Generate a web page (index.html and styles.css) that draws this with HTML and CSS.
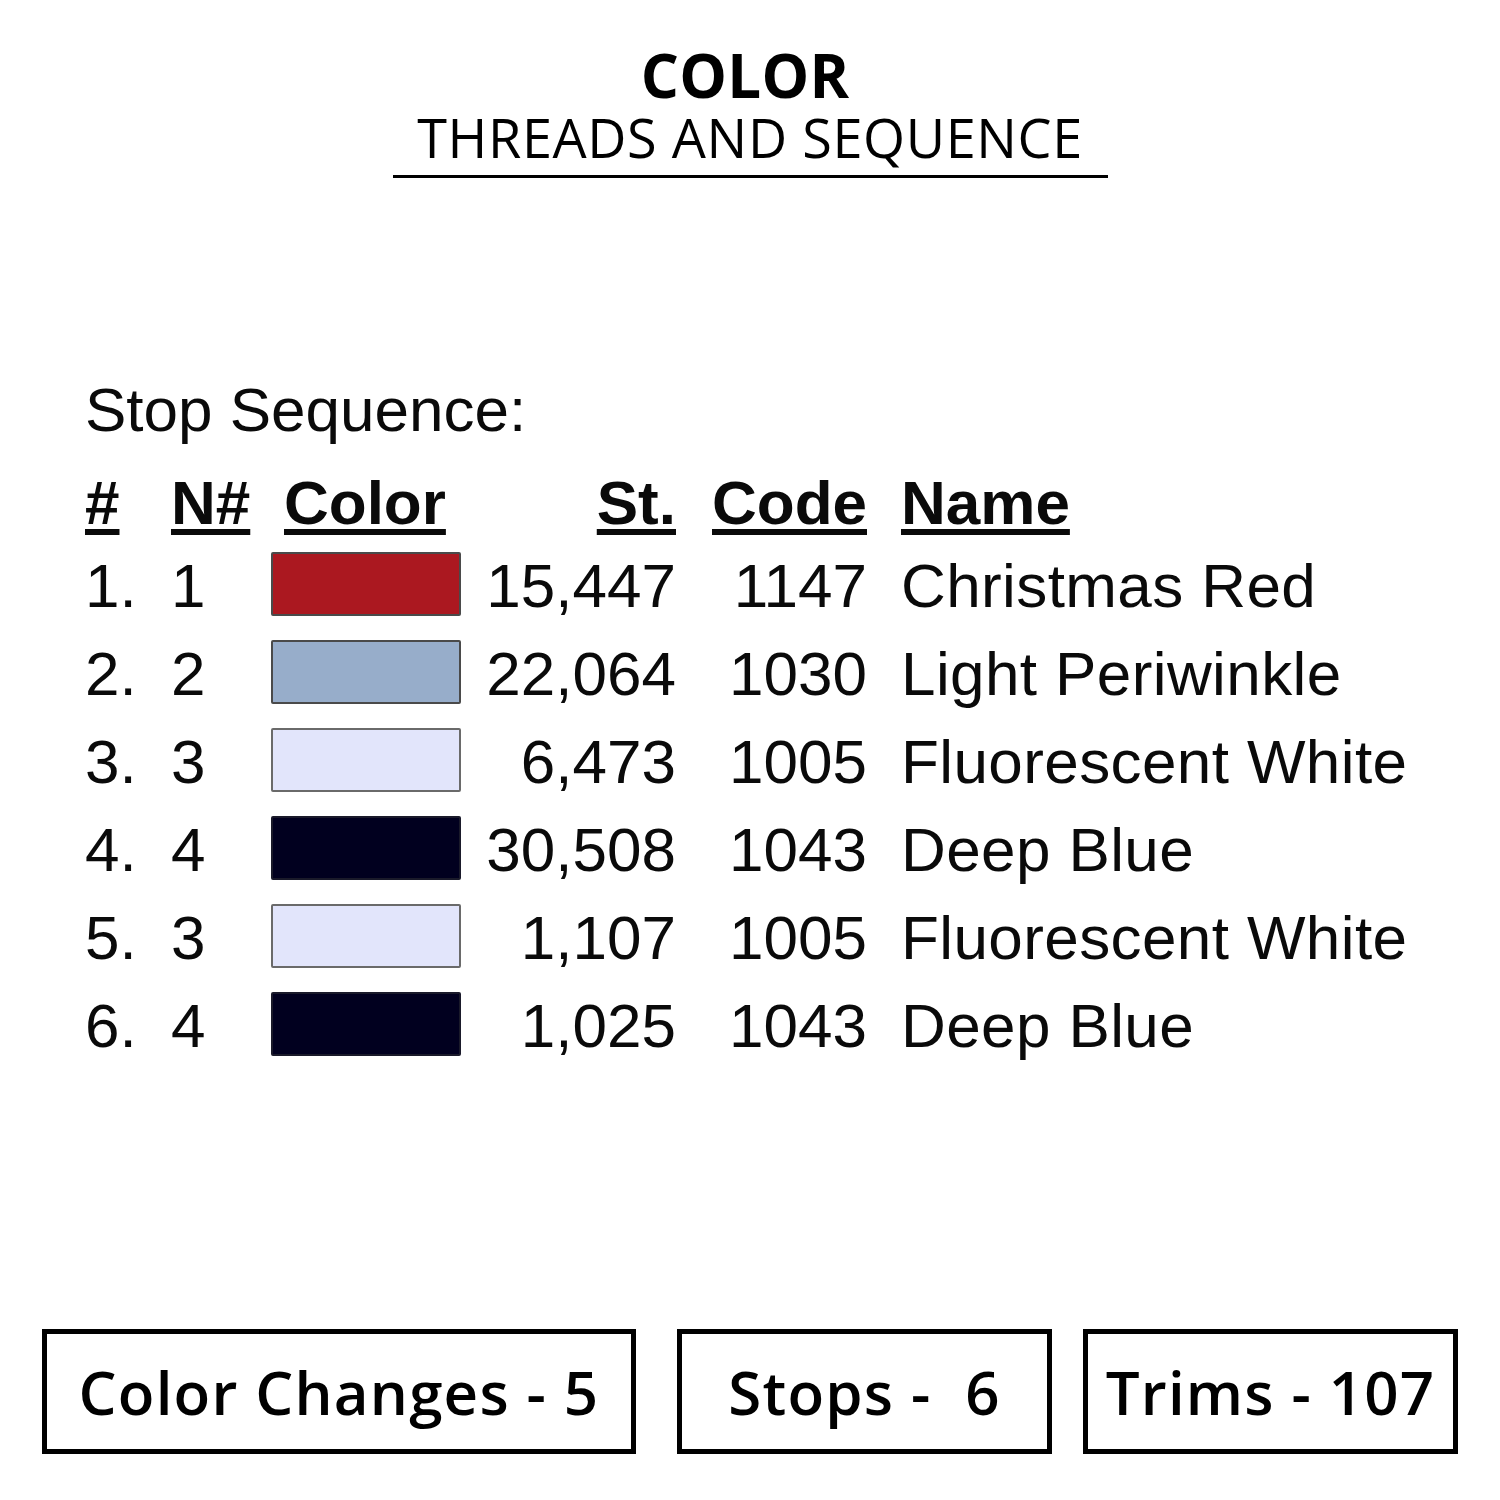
FILE: index.html
```html
<!DOCTYPE html>
<html lang="en">
<head>
<meta charset="utf-8">
<title>Color - Threads and Sequence</title>
<link rel="stylesheet" href="styles.css">
</head>
<body>
<div class="page">
  <header class="title-block">
    <div class="title">COLOR</div>
    <div class="subtitle">THREADS AND SEQUENCE</div>
  </header>

  <section class="sequence">
    <div class="seq-heading">Stop Sequence:</div>
    <div class="seq-table">
      <div class="th c-idx"><span class="u">#</span></div>
      <div class="th c-n"><span class="u">N#</span></div>
      <div class="th c-color"><span class="u">Color</span></div>
      <div class="th c-st"><span class="u">St.</span></div>
      <div class="th c-code"><span class="u">Code</span></div>
      <div class="th c-name"><span class="u">Name</span></div>

      <div class="td c-idx">1.</div>
      <div class="td c-n">1</div>
      <div class="td c-color"><span class="swatch sw-red"></span></div>
      <div class="td c-st">15,447</div>
      <div class="td c-code">1147</div>
      <div class="td c-name">Christmas Red</div>

      <div class="td c-idx">2.</div>
      <div class="td c-n">2</div>
      <div class="td c-color"><span class="swatch sw-peri"></span></div>
      <div class="td c-st">22,064</div>
      <div class="td c-code">1030</div>
      <div class="td c-name">Light Periwinkle</div>

      <div class="td c-idx">3.</div>
      <div class="td c-n">3</div>
      <div class="td c-color"><span class="swatch sw-white"></span></div>
      <div class="td c-st">6,473</div>
      <div class="td c-code">1005</div>
      <div class="td c-name">Fluorescent White</div>

      <div class="td c-idx">4.</div>
      <div class="td c-n">4</div>
      <div class="td c-color"><span class="swatch sw-blue"></span></div>
      <div class="td c-st">30,508</div>
      <div class="td c-code">1043</div>
      <div class="td c-name">Deep Blue</div>

      <div class="td c-idx">5.</div>
      <div class="td c-n">3</div>
      <div class="td c-color"><span class="swatch sw-white"></span></div>
      <div class="td c-st">1,107</div>
      <div class="td c-code">1005</div>
      <div class="td c-name">Fluorescent White</div>

      <div class="td c-idx">6.</div>
      <div class="td c-n">4</div>
      <div class="td c-color"><span class="swatch sw-blue"></span></div>
      <div class="td c-st">1,025</div>
      <div class="td c-code">1043</div>
      <div class="td c-name">Deep Blue</div>
    </div>
  </section>

  <footer class="stats">
    <div class="stat stat-wide">Color Changes - 5</div>
    <div class="stat">Stops -&nbsp; 6</div>
    <div class="stat">Trims - 107</div>
  </footer>
</div>
</body>
</html>
```
FILE: styles.css
```css
html, body {
  margin: 0;
  padding: 0;
  background: #ffffff;
}

.page {
  width: 1500px;
  height: 1500px;
  box-sizing: border-box;
  display: flex;
  flex-direction: column;
  color: #000;
}

/* ---------- title ---------- */
.title-block {
  align-self: center;
  width: 715px;
  margin-top: 45px;
  padding-bottom: 8px;
  border-bottom: 3px solid #000;
  text-align: center;
  font-family: "Open Sans", "Noto Sans", sans-serif;
}

.title {
  font-size: 60px;
  font-weight: 700;
  line-height: 60px;
  letter-spacing: 0.3px;
  padding-right: 10px;
}

.subtitle {
  font-size: 54px;
  font-weight: 400;
  line-height: 60px;
  letter-spacing: 0.6px;
  margin-top: 2px;
}

/* ---------- sequence table ---------- */
.sequence {
  margin-top: 178px;
  padding-left: 83px;
  font-family: "Liberation Sans", Arial, sans-serif;
  font-size: 62px;
  color: #0a0a0a;
}

.seq-heading {
  line-height: 108px;
  padding-left: 2px;
}

.seq-table {
  display: grid;
  grid-template-columns: 88px 100px 190px 215px 191px auto;
  grid-template-rows: 78px repeat(6, 88px);
}

.th {
  font-weight: 700;
  line-height: 78px;
  white-space: nowrap;
}

.td {
  line-height: 88px;
  white-space: nowrap;
}

.td.c-name {
  letter-spacing: 0.4px;
}

.u {
  text-decoration: underline;
  text-decoration-thickness: 6px;
  text-underline-offset: 5px;
}

.c-idx { padding-left: 2px; }
.c-n { padding-left: 0; }
.th.c-color { padding-left: 13px; }
.c-st { text-align: right; }
.c-code { text-align: right; }
.c-name { padding-left: 34px; }

.td.c-color {
  display: flex;
  align-items: flex-start;
}

.swatch {
  display: block;
  width: 190px;
  height: 64px;
  margin-top: 10px;
  box-sizing: border-box;
  border: 2px solid #4a4a4a;
  border-radius: 2px;
}

.sw-red { background: #ab1820; }
.sw-peri { background: #97adca; }
.sw-white { background: #e2e5fb; border-color: #6a6a6a; }
.sw-blue { background: #01001f; border-color: #1a1a2a; }

/* ---------- stats boxes ---------- */
.stats {
  margin-top: auto;
  margin-bottom: 46px;
  padding-left: 42px;
  display: flex;
}

.stat {
  box-sizing: border-box;
  width: 375px;
  height: 125px;
  border: 5px solid #000;
  display: flex;
  align-items: center;
  justify-content: center;
  font-family: "Open Sans", "Noto Sans", sans-serif;
  font-weight: 600;
  font-size: 60px;
  letter-spacing: 1.2px;
  white-space: nowrap;
}

.stat-wide {
  width: 594px;
  margin-right: 41px;
}

.stat + .stat + .stat {
  margin-left: 31px;
}
```
